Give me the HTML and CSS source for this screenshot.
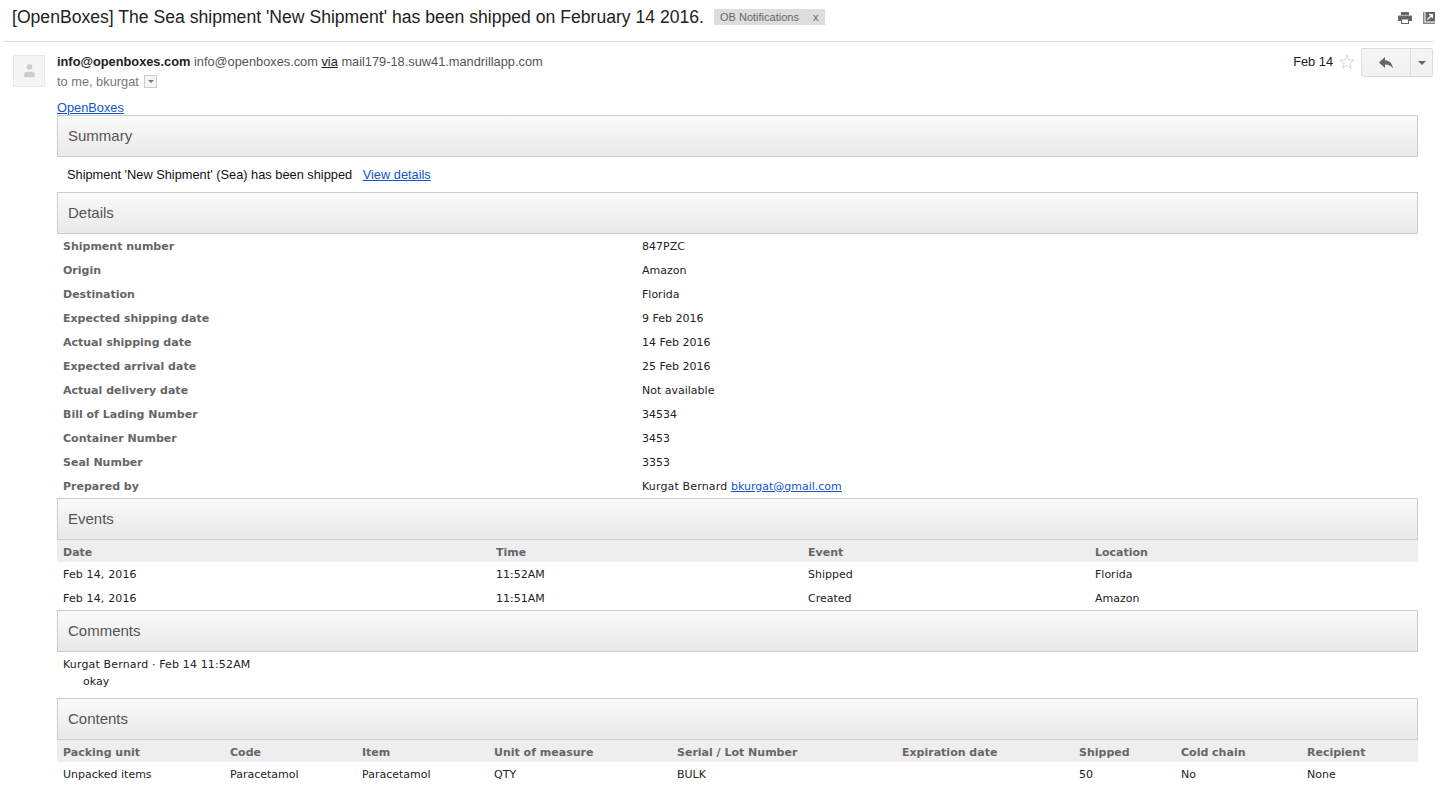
FILE: index.html
```html
<!DOCTYPE html>
<html lang="en">
<head>
    <meta charset="UTF-8">
    <title>[OpenBoxes] The Sea shipment 'New Shipment' has been shipped</title>
    <link rel="stylesheet" href="styles.css">
</head>
<body>

<div class="subject-bar">
    <h1 class="subject">[OpenBoxes] The Sea shipment 'New Shipment' has been shipped on February 14 2016.</h1>
    <span class="label">OB Notifications <span class="label-x">x</span></span>
    <div class="subject-icons">
        <svg width="14" height="12" viewBox="0 0 14 12"><path fill="#666" d="M3 0h8v3H3zM1 3.500h12a1 1 0 0 1 1 1V9h-3v3H3V9H0V4.500a1 1 0 0 1 1-1zM4 7.500V11h6V7.500z"/></svg>
        <svg width="12" height="12" viewBox="0 0 12 12"><path fill="#888" d="M0 0h1.500v10.500H12V12H0z"/><path fill="#666" d="M2.500 0H12v9.500H2.500z"/><path fill="none" stroke="#fff" stroke-width="1.300" d="M4.500 7.500L9 3M6 2.700h3.300V6"/></svg>
    </div>
</div>

<div class="message-head">
    <div class="avatar">
        <svg width="11" height="14" viewBox="0 0 12 16"><circle cx="6" cy="3.500" r="3.200" fill="#ccc"/><path fill="#ccc" d="M0 15v-3.500C0 9.500 2 8.500 6 8.500s6 1 6 3V15z"/></svg>
    </div>
    <div class="sender">
        <div class="from"><b>info@openboxes.com</b> <span class="grey">info@openboxes.com</span> <u>via</u> <span class="grey">mail179-18.suw41.mandrillapp.com</span></div>
        <div class="to">to me, bkurgat <span class="to-arrow"></span></div>
    </div>
    <div class="date">Feb 14</div>
    <svg class="star" width="16" height="16" viewBox="0 0 16 16"><path fill="none" stroke="#d4d4d4" d="M8 1l1.800 4.900 5.200.2-4.100 3.200 1.400 5L8 11.400l-4.300 2.900 1.400-5L1 6.100l5.200-.2z"/></svg>
    <div class="reply-group">
        <div class="reply">
            <svg width="14" height="12" viewBox="0 0 14 12"><path fill="#666" d="M6 0v3.200c5 .3 7.300 3.500 8 8.300-1.800-2.900-4.300-4-8-4V11L0 5.500z"/></svg>
        </div>
        <div class="reply-more"><span class="caret"></span></div>
    </div>
</div>

<div class="mail">
    <a href="#">OpenBoxes</a>

    <h2 class="section">Summary</h2>
    <div class="summary">Shipment 'New Shipment' (Sea) has been shipped <a href="#">View details</a></div>

    <h2 class="section">Details</h2>
    <table class="data">
        <tr><th class="c-579">Shipment number</th><td>847PZC</td></tr>
        <tr><th>Origin</th><td>Amazon</td></tr>
        <tr><th>Destination</th><td>Florida</td></tr>
        <tr><th>Expected shipping date</th><td>9 Feb 2016</td></tr>
        <tr><th>Actual shipping date</th><td>14 Feb 2016</td></tr>
        <tr><th>Expected arrival date</th><td>25 Feb 2016</td></tr>
        <tr><th>Actual delivery date</th><td>Not available</td></tr>
        <tr><th>Bill of Lading Number</th><td>34534</td></tr>
        <tr><th>Container Number</th><td>3453</td></tr>
        <tr><th>Seal Number</th><td>3353</td></tr>
        <tr><th>Prepared by</th><td class="spaced">Kurgat Bernard <a class="plain" href="#">bkurgat@gmail.com</a></td></tr>
    </table>

    <h2 class="section">Events</h2>
    <table class="data list">
        <tr class="head"><th class="c-433">Date</th><th class="c-312">Time</th><th class="c-287">Event</th><th>Location</th></tr>
        <tr><td class="spaced">Feb 14, 2016</td><td>11:52AM</td><td>Shipped</td><td>Florida</td></tr>
        <tr><td class="spaced">Feb 14, 2016</td><td>11:51AM</td><td>Created</td><td>Amazon</td></tr>
    </table>

    <h2 class="section">Comments</h2>
    <div class="comment">
        <div class="spaced">Kurgat Bernard · Feb 14 11:52AM</div>
        <div class="comment-text">okay</div>
    </div>

    <h2 class="section">Contents</h2>
    <table class="data list">
        <tr class="head">
            <th class="c-167">Packing unit</th>
            <th class="c-132">Code</th>
            <th class="c-132">Item</th>
            <th class="c-183">Unit of measure</th>
            <th class="c-225">Serial / Lot Number</th>
            <th class="c-177">Expiration date</th>
            <th class="c-102">Shipped</th>
            <th class="c-126">Cold chain</th>
            <th>Recipient</th>
        </tr>
        <tr><td>Unpacked items</td><td>Paracetamol</td><td>Paracetamol</td><td>QTY</td><td>BULK</td><td></td><td>50</td><td>No</td><td>None</td></tr>
    </table>
</div>

</body>
</html>
```

FILE: styles.css
```css
body {
    margin: 0;
    background-color: #fff;
    color: #222;
    font-family: "Liberation Sans", Arial, sans-serif;
    font-size: 12.8px;
    overflow: hidden;
}

a {
    color: #15c;
}

.subject-bar {
    display: flex;
    align-items: center;
    height: 41px;
    margin: 0 21px 0 4px;
    padding: 0 0 0 8px;
    border-bottom: 1px solid #ddd;
    box-sizing: content-box;
}

.subject {
    margin: -7px 0 0;
    font-size: 17.6px;
    font-weight: normal;
    color: #222;
}

.label {
    margin: -7px 0 0 10px;
    padding: 0 7px 0 6px;
    height: 16px;
    line-height: 16px;
    background-color: #ddd;
    color: #666;
    font-size: 11px;
}

.label-x {
    margin-left: 11px;
}

.subject-icons {
    display: flex;
    align-items: center;
    gap: 11px;
    margin: -5px -2px 0 auto;
}

.message-head {
    display: flex;
    margin: 11px 21px 0 13px;
    height: 47px;
}

.avatar {
    display: flex;
    align-items: center;
    justify-content: center;
    width: 30px;
    height: 30px;
    margin-top: 2px;
    border: 1px solid #e8e8e8;
    background-color: #f5f5f5;
}

.sender {
    flex: 1;
    margin-left: 12px;
}

.from {
    margin-top: 1px;
    line-height: 16px;
    color: #222;
}

.grey {
    color: #555;
}

.to {
    margin-top: 4px;
    line-height: 16px;
    color: #777;
}

.to-arrow {
    display: inline-block;
    position: relative;
    width: 11px;
    height: 11px;
    margin-left: 2px;
    border: 1px solid #ccc;
    vertical-align: -2px;
    background-color: #f5f5f5;
}

.to-arrow::after {
    content: "";
    position: absolute;
    left: 3px;
    top: 4px;
    border: 3px solid transparent;
    border-top: 3px solid #777;
    border-bottom: 0;
}

.date {
    margin: 1px 5px 0 0;
    line-height: 16px;
}

.star {
    margin: 1px 6px 0 1px;
}

.reply-group {
    display: flex;
    height: 27px;
    margin-top: -5px;
    border: 1px solid #ddd;
    border-radius: 2px;
    background: linear-gradient(#f5f5f5, #f1f1f1);
}

.reply {
    display: flex;
    align-items: center;
    justify-content: center;
    width: 48px;
    border-right: 1px solid #ddd;
}

.reply-more {
    display: flex;
    align-items: center;
    justify-content: center;
    width: 21px;
}

.caret {
    border: 4px solid transparent;
    border-top: 4px solid #666;
    border-bottom: 0;
}

.mail {
    margin: 0 36px 0 57px;
    line-height: 15px;
}

.section {
    margin: 0;
    height: 40px;
    padding: 0 10px;
    line-height: 40px;
    border: 1px solid #ccc;
    background: linear-gradient(#fafafa, #e9e9e9);
    color: #555;
    font-size: 15px;
    font-weight: normal;
}

.summary {
    height: 35px;
    padding-left: 10px;
    line-height: 35px;
    color: #111;
    box-sizing: border-box;
}

.summary a {
    margin-left: 7px;
}

.data {
    width: 100%;
    border-collapse: collapse;
    table-layout: fixed;
    font-family: "DejaVu Sans", Verdana, sans-serif;
    font-size: 11px;
}

.data th,
.data td {
    height: 24px;
    padding: 0 6px;
    text-align: left;
    color: #222;
    box-sizing: border-box;
}

.data th {
    color: #666;
    font-weight: bold;
}

.list .head th {
    height: 22px;
    padding-top: 2px;
    background-color: #eee;
}

.spaced {
    letter-spacing: .15px;
}

.spaced .plain {
    letter-spacing: 0;
}

.c-579 { width: 579px; }
.c-433 { width: 433px; }
.c-312 { width: 312px; }
.c-287 { width: 287px; }
.c-225 { width: 225px; }
.c-183 { width: 183px; }
.c-177 { width: 177px; }
.c-167 { width: 167px; }
.c-132 { width: 132px; }
.c-126 { width: 126px; }
.c-102 { width: 102px; }

.comment {
    height: 46px;
    padding: 4px 6px 0;
    font-family: "DejaVu Sans", Verdana, sans-serif;
    font-size: 11px;
    line-height: 17px;
    box-sizing: border-box;
}

.comment-text {
    padding-left: 20px;
}
```
